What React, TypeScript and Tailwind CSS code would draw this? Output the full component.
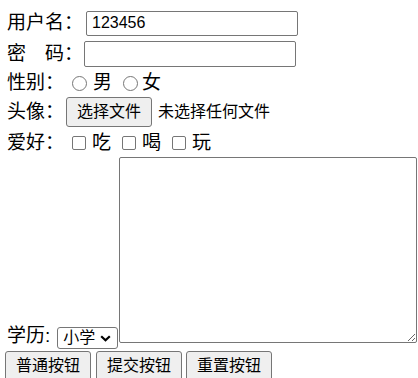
import React from "react";

const font = { fontFamily: '"Liberation Sans", "Noto Sans CJK SC", sans-serif' };

export default function App() {
  const radio = "appearance-none m-0 w-[15px] h-[15px] rounded-full border border-[#767676] bg-white";
  const check = "appearance-none m-0 w-[14px] h-[14px] rounded-[2px] border border-[#767676] bg-white";
  return (
    <div className="w-[418px] h-[378px] overflow-hidden bg-white text-black" style={font}>
      <div className="flex flex-col pt-[8px]">
        {/* row 1 */}
        <div className="flex items-center h-[30px]">
          <span className="ml-[7px] text-[19px] leading-[24px] whitespace-nowrap">用户名：</span>
          <input
            defaultValue="123456"
            className="ml-[3px] w-[212px] h-[25px] border border-[#767676] rounded-[2px] px-[5px] text-[16px] leading-[20px] outline-none"
          />
        </div>
        {/* row 2 */}
        <div className="flex items-center h-[32px]">
          <span className="ml-[7px] text-[19px] leading-[24px] whitespace-nowrap">密　码：</span>
          <input
            type="password"
            className="ml-[1px] w-[212px] h-[26px] border border-[#767676] rounded-[2px] px-[5px] text-[16px] outline-none"
          />
        </div>
        {/* row 3 */}
        <div className="flex items-center h-[26px]">
          <span className="ml-[7px] text-[19px] leading-[24px] whitespace-nowrap">性别：</span>
          <input type="radio" name="sex" className={`${radio} ml-[8px]`} />
          <span className="ml-[6px] text-[19px] leading-[24px]">男</span>
          <input type="radio" name="sex" className={`${radio} ml-[11px]`} />
          <span className="ml-[4px] text-[19px] leading-[24px]">女</span>
        </div>
        {/* row 4 */}
        <div className="flex items-center h-[32px]">
          <span className="ml-[7px] text-[19px] leading-[24px] whitespace-nowrap">头像：</span>
          <button className="ml-[2px] w-[86px] h-[30px] bg-[#efefef] border border-[#767676] rounded-[3px] text-[16px] leading-[20px] whitespace-nowrap">
            选择文件
          </button>
          <span className="ml-[6px] text-[16px] leading-[20px] whitespace-nowrap">未选择任何文件</span>
        </div>
        {/* row 5 */}
        <div className="flex items-center h-[29px]">
          <span className="ml-[7px] text-[19px] leading-[24px] whitespace-nowrap">爱好：</span>
          <input type="checkbox" className={`${check} ml-[8px]`} />
          <span className="ml-[6px] text-[19px] leading-[24px]">吃</span>
          <input type="checkbox" className={`${check} ml-[11px]`} />
          <span className="ml-[6px] text-[19px] leading-[24px]">喝</span>
          <input type="checkbox" className={`${check} ml-[11px]`} />
          <span className="ml-[6px] text-[19px] leading-[24px]">玩</span>
        </div>
        {/* row 6 */}
        <div className="flex items-end h-[193px]">
          <span className="ml-[7px] mb-[2px] text-[19px] leading-[24px] whitespace-nowrap">学历:</span>
          <div className="relative ml-[7px] mb-[1px] w-[61px] h-[22px] border border-[#767676] rounded-[3px] flex items-center">
            <span className="ml-[5px] text-[16px] leading-[20px]">小学</span>
            <svg className="absolute left-[42px] top-[7px]" width="11" height="7" viewBox="0 0 11 7">
              <path d="M1.2 1.2 L5.5 5.3 L9.8 1.2" fill="none" stroke="#000" strokeWidth="2.2" />
            </svg>
          </div>
          <textarea className="ml-[1px] mb-[7px] w-[298px] h-[186px] border border-[#767676] rounded-[2px] outline-none resize" />
        </div>
        {/* row 7 */}
        <div className="flex items-start h-[30px] mt-[1px]">
          <button className="ml-[5px] w-[86px] h-[30px] bg-[#efefef] border border-[#767676] rounded-[3px] text-[16px] leading-[20px] whitespace-nowrap">
            普通按钮
          </button>
          <button className="ml-[5px] w-[86px] h-[30px] bg-[#efefef] border border-[#767676] rounded-[3px] text-[16px] leading-[20px] whitespace-nowrap">
            提交按钮
          </button>
          <button className="ml-[4px] w-[86px] h-[30px] bg-[#efefef] border border-[#767676] rounded-[3px] text-[16px] leading-[20px] whitespace-nowrap">
            重置按钮
          </button>
        </div>
      </div>
    </div>
  );
}
